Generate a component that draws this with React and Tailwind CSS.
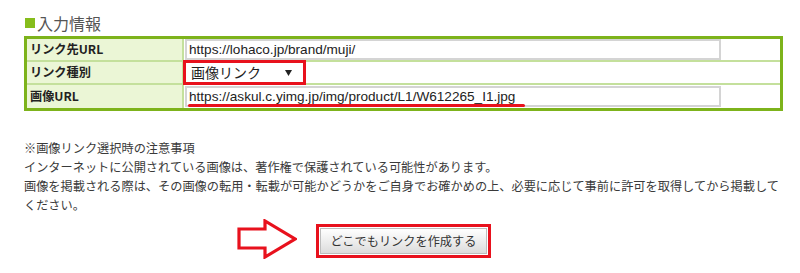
import React from "react";

const jp = { fontFamily: '"Noto Sans CJK JP", "Noto Sans", sans-serif' };

function Row({ label, children, last }) {
  return (
    <div className={`flex h-[23px] ${last ? "" : "border-b-2 border-[#c4e09c]"}`}>
      <div className="w-[157px] shrink-0 bg-[#ebf6d6] border-r-2 border-[#c4e09c] flex items-center pl-[3px] text-[12.2px] font-bold text-[#222]">
        {label}
      </div>
      <div className="flex-1 relative flex items-center">{children}</div>
    </div>
  );
}

function Input({ value }) {
  return (
    <div
      className="ml-px w-[536px] h-[21px] border-2 border-[#d4d4d4] bg-white flex items-center pl-[2px] text-[13.6px] text-[#222] leading-none"
      style={{ fontFamily: '"Liberation Sans", Arial, sans-serif' }}
    >
      {value}
    </div>
  );
}

export default function App() {
  return (
    <div className="w-[800px] h-[273px] bg-white pl-[24px] pt-[12px]" style={jp}>
      <div className="flex items-center h-[22px] text-[16px] text-[#555]">
        <span className="w-[10px] h-[10px] bg-[#86bd1c] ml-px mr-[2px]"></span>
        <span>入力情報</span>
      </div>
      <div className="mt-[2px] w-[759px] border-[3px] border-[#7db31b]">
        <Row label="リンク先URL">
          <Input value="https://lohaco.jp/brand/muji/" />
        </Row>
        <Row label="リンク種別">
          <div className="-ml-px w-[123px] h-[25px] -my-px border-[3px] border-[#e8111d] bg-white flex items-center justify-between pl-[5px] pr-[11px]">
            <span className="text-[14px] text-[#222]">画像リンク</span>
            <svg width="7" height="6" viewBox="0 0 7 6">
              <polygon points="0,0 7,0 3.5,6" fill="#222" />
            </svg>
          </div>
        </Row>
        <Row label="画像URL" last>
          <Input value="https://askul.c.yimg.jp/img/product/L1/W612265_I1.jpg" />
          <div className="absolute left-[4px] top-[19px] w-[337px] h-[3px] bg-[#e8111d] rounded-full"></div>
        </Row>
      </div>
      <div className="mt-[28px] text-[12.2px] leading-[19px] text-[#3a3a3a]">
        <div>※画像リンク選択時の注意事項</div>
        <div>インターネットに公開されている画像は、著作権で保護されている可能性があります。</div>
        <div>
          画像を掲載される際は、その画像の転用・転載が可能かどうかをご自身でお確かめの上、必要に応じて事前に許可を取得してから掲載して
          <br />
          ください。
        </div>
      </div>
      <div className="mt-[3px] flex items-start pl-[213px]">
        <svg width="60" height="40" viewBox="0 0 60 40" className="mt-[1px]">
          <polygon
            points="2,10 28,10 28,2 58,20 28,38 28,29 2,29"
            fill="#fff"
            stroke="#e8111d"
            strokeWidth="3.2"
            strokeLinejoin="miter"
          />
        </svg>
        <div className="ml-[19px] mt-[6px] w-[175px] h-[34px] border-[3.5px] border-[#e8111d] p-px">
          <div className="w-full h-full border border-[#bdbdbd] bg-gradient-to-b from-[#ffffff] to-[#dcdcdc] flex items-center justify-center text-[12.2px] text-[#333]">
            どこでもリンクを作成する
          </div>
        </div>
      </div>
    </div>
  );
}
